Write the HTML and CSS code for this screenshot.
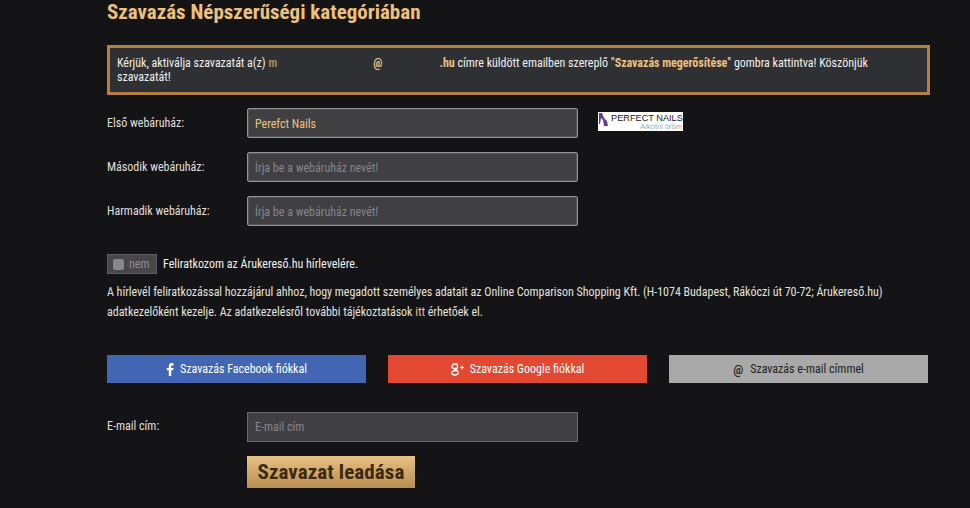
FILE: index.html
```html
<!DOCTYPE html>
<html lang="hu">
<head>
  <meta charset="UTF-8">
  <meta name="viewport" content="width=device-width, initial-scale=1.0">
  <title>Szavazás</title>
  <link rel="stylesheet" href="styles.css">
</head>
<body>
  <div class="content">
    <h2>Szavazás Népszerűségi kategóriában</h2>

    <div class="alert">
      Kérjük, aktiválja szavazatát a(z) <b class="gold"><span class="fade">m</span><span class="mask-a"></span>@<span class="mask-b"></span>.hu</b> címre küldött emailben szereplő "<b class="gold">Szavazás megerősítése</b>" gombra kattintva! Köszönjük szavazatát!
    </div>

    <div class="row">
      <label>Első webáruház:</label>
      <input class="field filled" type="text" value="Perefct Nails">
      <svg class="shop-logo" width="85" height="19" viewBox="0 0 85 19">
        <rect width="85" height="19" fill="#fff"/>
        <path d="M1 1h3l2 5 3 3 1 5H6L5 8 3 6 2 12H1z" fill="#6b3a93"/>
        <text x="13" y="9" class="logo-name">PERFECT NAILS</text>
        <text x="84" y="17" class="logo-sub" text-anchor="end">Alkotni öröm</text>
      </svg>
    </div>
    <div class="row">
      <label>Második webáruház:</label>
      <input class="field" type="text" placeholder="Írja be a webáruház nevét!">
    </div>
    <div class="row">
      <label>Harmadik webáruház:</label>
      <input class="field" type="text" placeholder="Írja be a webáruház nevét!">
    </div>

    <div class="newsletter">
      <span class="toggle"><i></i>nem</span>
      Feliratkozom az Árukereső.hu hírlevelére.
    </div>
    <p class="legal">A hírlevél feliratkozással hozzájárul ahhoz, hogy megadott személyes adatait az Online Comparison Shopping Kft. (H-1074 Budapest, Rákóczi út 70-72; Árukereső.hu) adatkezelőként kezelje. Az adatkezelésről további tájékoztatások <a href="#">itt</a> érhetőek el.</p>

    <div class="vote-buttons">
      <a class="btn fb" href="#">
        <svg width="8" height="13" viewBox="0 0 8 13"><path d="M5.200 13V7.200h2l.3-2.300H5.200V3.500c0-.7.2-1.100 1.100-1.100h1.200V.3C7.300.2 6.600.1 5.800.1 4 .1 2.800 1.200 2.800 3.200v1.700H.8v2.300h2V13z" fill="#fff"/></svg>
        Szavazás Facebook fiókkal
      </a>
      <a class="btn gplus" href="#">
        <svg width="13" height="13" viewBox="0 0 13 13"><path d="M6.500 1H3.500C2 1 1 2 1 3.300s1 2.200 2.200 2.200h1.300c-.6 1-.2 1.500.3 2C2.500 7.500 .8 8.300 .8 9.800.8 11.200 2.300 12 4 12c1.800 0 3.200-1 3.200-2.500C7.200 7.800 5.200 7.500 5.200 6.500c0-.7 1.400-1.100 1.400-3C6.600 2.500 6 1.800 5.500 1.400" fill="none" stroke="#fff" stroke-width="1.300"/><path d="M9 4.500h4M11 2.500v4" stroke="#fff" stroke-width="1.100"/></svg>
        Szavazás Google fiókkal
      </a>
      <a class="btn mail" href="#"><span class="at">@</span> Szavazás e-mail címmel</a>
    </div>

    <div class="row email-row">
      <label>E-mail cím:</label>
      <input class="field flat" type="text" placeholder="E-mail cím">
    </div>
    <button class="submit">Szavazat leadása</button>
  </div>
</body>
</html>
```

FILE: styles.css
```css
* {
  box-sizing: border-box;
}
html, body {
  height: 100%;
}
body {
  margin: 0;
  overflow: hidden;
  background: #141417;
  color: #f1f0ec;
  font-family: "Roboto", "Liberation Sans", sans-serif;
  font-stretch: 75%;
  font-size: 12px;
}
.content {
  width: 823px;
  margin-left: 107px;
}
h2 {
  margin: 0;
  height: 45px;
  color: #ecc07e;
  font-size: 21px;
  line-height: 25px;
  font-weight: 700;
}
.gold {
  color: #ecc07e;
}
.fade {
  opacity: .6;
}
.alert {
  height: 50px;
  padding: 8px 7px;
  margin-bottom: 13px;
  background: #2f3033;
  border: 3px solid #b5803f;
  font-size: 12px;
  line-height: 14px;
  letter-spacing: -.02px;
}
.mask-a {
  display: inline-block;
  width: 96px;
}
.mask-b {
  display: inline-block;
  width: 57px;
}
.row {
  display: flex;
  align-items: flex-start;
  height: 30px;
  margin-bottom: 14px;
}
.row label {
  width: 140px;
  padding-top: 7px;
  color: #e0dfdb;
  line-height: 16px;
}
.field {
  width: 331px;
  height: 30px;
  padding: 1px 7px 0;
  background: #404043;
  border: 1px solid #949497;
  border-radius: 2px;
  box-shadow: inset 0 0 0 1px #55555a;
  color: #ecc07e;
  font: inherit;
  font-stretch: 75%;
  outline: none;
}
.field::placeholder {
  color: #85858a;
}
.flat {
  padding-top: 0;
  border-color: #69696c;
  border-radius: 0;
  box-shadow: none;
}
.email-row label {
  padding-top: 6px;
}
.shop-logo {
  margin: 4px 0 0 20px;
}
.logo-name {
  font-family: "Liberation Sans", sans-serif;
  font-size: 9.200px;
  fill: #222;
}
.logo-sub {
  font-family: "Liberation Sans", sans-serif;
  font-size: 7.500px;
  fill: #aaa;
}
.newsletter {
  display: flex;
  align-items: center;
  height: 20px;
  margin-top: 28px;
  line-height: 20px;
}
.toggle {
  display: flex;
  align-items: center;
  width: 50px;
  height: 20px;
  margin-right: 6px;
  padding-left: 5px;
  background: #47474a;
  border: 1px solid #5d5d60;
  color: #8d8d90;
}
.toggle i {
  width: 11px;
  height: 11px;
  margin-right: 5px;
  background: #88888b;
  border-radius: 2px;
}
.legal {
  margin: 8px 0 0;
  line-height: 20px;
  color: #e2e1dd;
  letter-spacing: -.025px;
}
.legal a {
  color: #ecc07e;
  text-decoration: none;
}
.vote-buttons {
  display: flex;
  justify-content: space-between;
  width: 821px;
  margin-top: 33px;
  margin-bottom: 29px;
}
.btn {
  display: flex;
  align-items: center;
  justify-content: center;
  gap: 6px;
  width: 259px;
  height: 28px;
  color: #fff;
  text-decoration: none;
}
.fb {
  background: #4266b4;
}
.gplus {
  background: #e24832;
}
.mail {
  background: #a9a9a9;
  color: #222;
}
.at {
  font-size: 13px;
  font-weight: 500;
  margin-right: 1px;
}
.email-row {
  margin-bottom: 14px;
}
.submit {
  display: block;
  width: 168px;
  height: 32px;
  margin-left: 140px;
  background: linear-gradient(#e8c183, #b98e52);
  border: none;
  color: #3a2a14;
  font: inherit;
  font-stretch: 75%;
  font-size: 21px;
  font-weight: 700;
  letter-spacing: .1px;
}
```
